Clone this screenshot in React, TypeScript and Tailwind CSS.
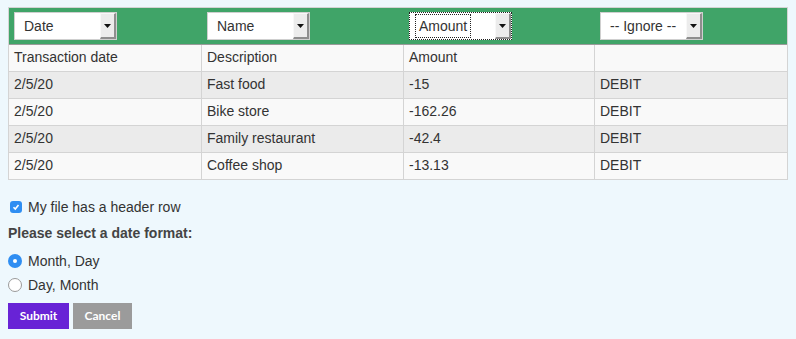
import React from "react";

const rows = [
  ["2/5/20", "Fast food", "-15", "DEBIT"],
  ["2/5/20", "Bike store", "-162.26", "DEBIT"],
  ["2/5/20", "Family restaurant", "-42.4", "DEBIT"],
  ["2/5/20", "Coffee shop", "-13.13", "DEBIT"],
];

const colW = ["w-[193px]", "w-[202px]", "w-[191px]", "w-[192px]"];

function Select({ label, focused }: { label: string; focused?: boolean }) {
  return (
    <div
      className={
        "flex w-[103px] h-[28px] bg-white " +
        (focused ? "border border-dotted border-[#222]" : "border border-[#cfcfcf]")
      }
    >
      <div className="flex-1 flex items-center pl-[9px]">
        <span
          className={
            "text-[14px] leading-[16px] text-[#333] " +
            (focused ? "outline outline-1 outline-dotted outline-[#222] outline-offset-[3px]" : "")
          }
        >
          {label}
        </span>
      </div>
      <div className="w-[16px] h-full bg-[#ececec] border-l border-t border-[#f8f8f8] border-r-2 border-b-2 border-r-[#8e8e8e] border-b-[#8e8e8e] flex items-center justify-center">
        <svg width="7" height="4" viewBox="0 0 7 4">
          <path d="M0 0 H7 L3.5 4 Z" fill="#111" />
        </svg>
      </div>
    </div>
  );
}

export default function App() {
  return (
    <div
      className="w-[796px] h-[339px] bg-[#eef8fd] pt-[7px] pl-[8px] text-[#333]"
      style={{ fontFamily: '"Liberation Sans", Arial, sans-serif' }}
    >
      <div className="w-[780px] border-l border-r border-t border-[#d4d4d4]">
        <div className="flex h-[37px] bg-[#40a468] border-b border-[#9a9a9a]">
          {["Date", "Name", "Amount", "-- Ignore --"].map((l, i) => (
            <div key={l} className={colW[i] + " flex items-center pl-[5px]"}>
              <Select label={l} focused={i === 2} />
            </div>
          ))}
        </div>
        {[["Transaction date", "Description", "Amount", ""], ...rows].map((r, ri) => (
          <div
            key={ri}
            className={
              "flex h-[27px] border-b border-[#d4d4d4] " +
              (ri % 2 === 0 ? "bg-[#f9f9f9]" : "bg-[#ebebeb]")
            }
          >
            {r.map((c, ci) => (
              <div
                key={ci}
                className={
                  colW[ci] +
                  " flex items-center pl-[5px] pb-[1px] text-[14px] " +
                  (ci < 3 ? "border-r border-[#d4d4d4]" : "")
                }
              >
                {c}
              </div>
            ))}
          </div>
        ))}
      </div>

      <div className="flex items-center mt-[19px] h-[16px]">
        <div className="ml-[2px] w-[12px] h-[12px] rounded-[3px] bg-[#2f8ef2] flex items-center justify-center">
          <svg width="8" height="8" viewBox="0 0 8 8">
            <path d="M1.5 4.2 L3.3 6 L6.5 2" stroke="white" strokeWidth="1.6" fill="none" />
          </svg>
        </div>
        <span className="ml-[6px] text-[14px] text-[#333]">My file has a header row</span>
      </div>

      <div className="mt-[8px] text-[14px] font-bold text-[#444]">Please select a date format:</div>

      <div className="flex items-center mt-[9px] h-[16px]">
        <div className="w-[14px] h-[14px] rounded-full bg-[#2f8ef2] flex items-center justify-center">
          <div className="w-[4px] h-[4px] rounded-full bg-white" />
        </div>
        <span className="ml-[6px] text-[14px]">Month, Day</span>
      </div>
      <div className="flex items-center mt-[8px] h-[16px]">
        <div className="w-[14px] h-[14px] rounded-full bg-white border border-[#9a9a9a]" />
        <span className="ml-[6px] text-[14px]">Day, Month</span>
      </div>

      <div className="flex gap-[4px] mt-[10px]" style={{ fontFamily: "Lato, sans-serif" }}>
        <div className="w-[61px] h-[26px] bg-[#6823d6] text-white text-[12px] font-bold flex items-center justify-center">
          Submit
        </div>
        <div className="w-[59px] h-[26px] bg-[#9b9b9b] text-white text-[12px] font-bold flex items-center justify-center">
          Cancel
        </div>
      </div>
    </div>
  );
}
